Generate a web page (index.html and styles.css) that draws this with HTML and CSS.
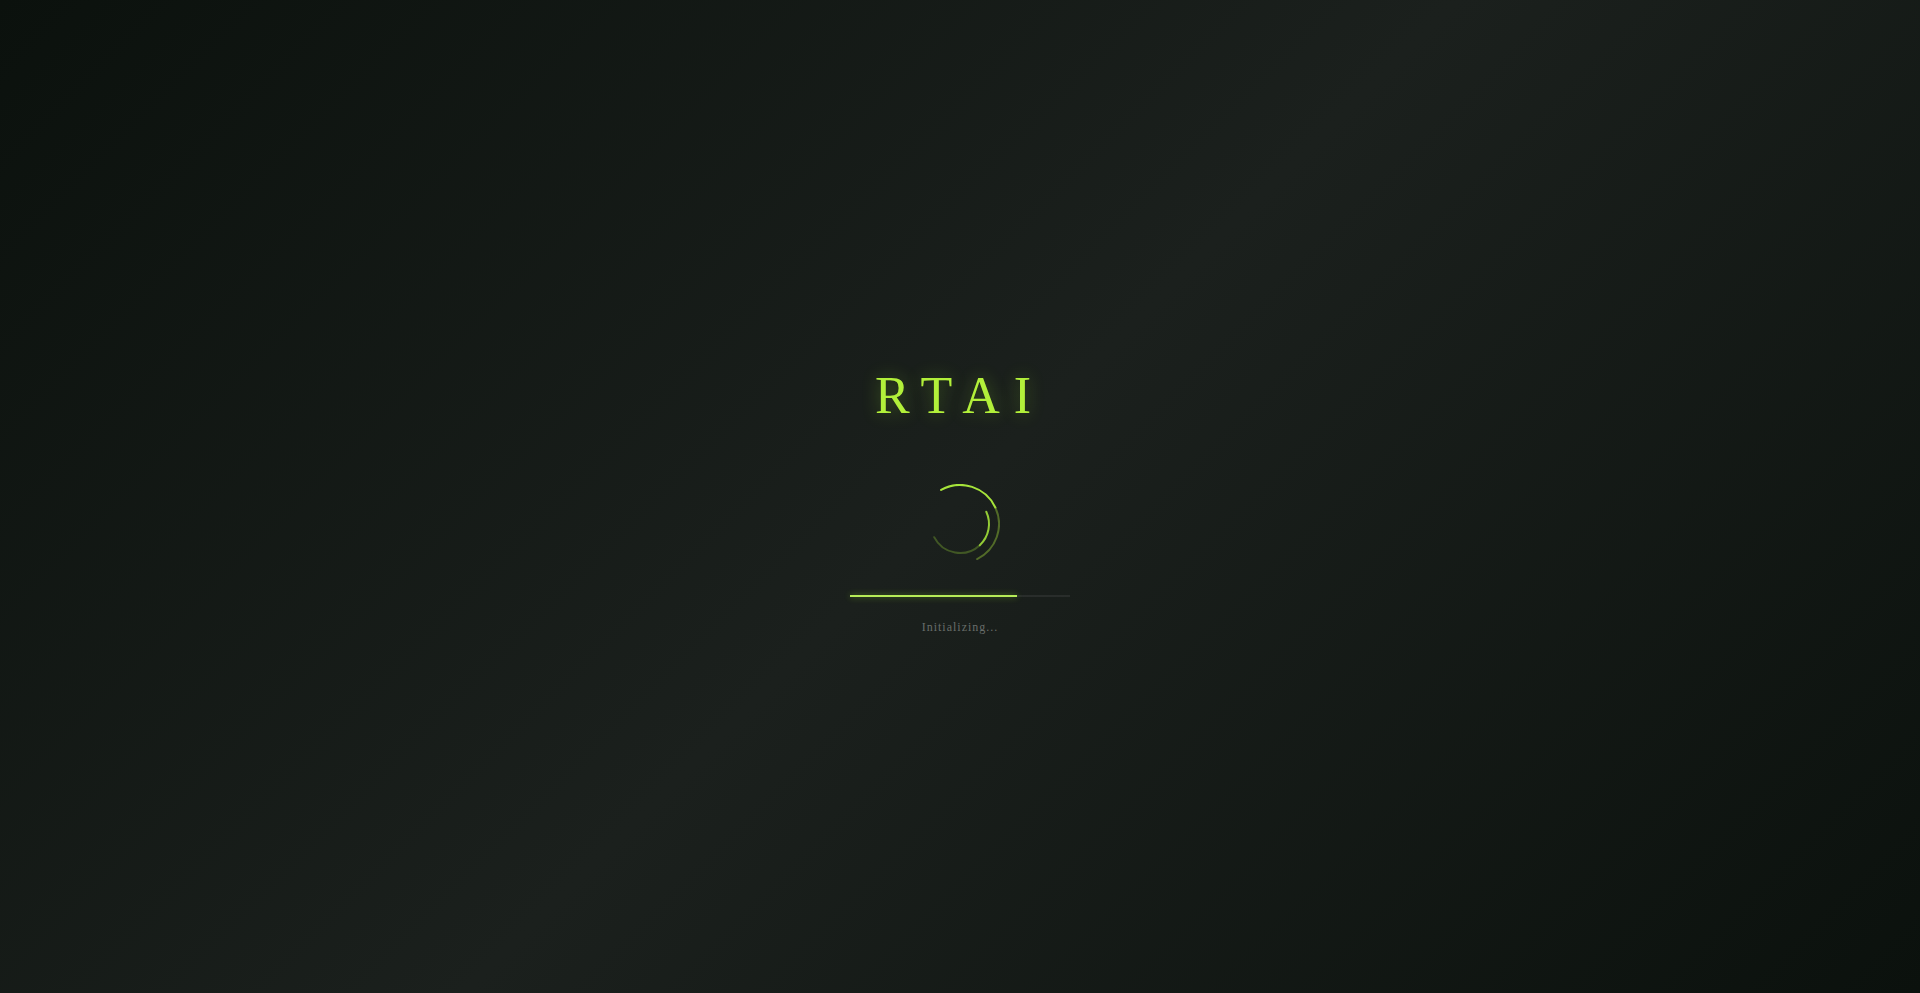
FILE: index.html
```html
<!DOCTYPE html>
<html lang="en">
<head>
<meta charset="utf-8">
<title>RTAI</title>
<link rel="stylesheet" href="styles.css">
</head>
<body>
<main class="loader">
  <h1 class="brand">RTAI</h1>
  <div class="spinner">
    <svg viewBox="0 0 80 80" width="80" height="80" aria-hidden="true">
      <path class="ring-outer-bright" d="M21.1 5.9 A39 39 0 0 1 75.35 23.52"/>
      <path class="ring-outer-dim" d="M75.35 23.52 A39 39 0 0 1 57.1 75.05"/>
      <path class="ring-inner-bright" d="M66.28 27.74 A29 29 0 0 1 59.78 61.21"/>
      <path class="ring-inner-dim" d="M59.78 61.21 A29 29 0 0 1 14.16 53.17"/>
    </svg>
  </div>
  <div class="progress"><div class="progress-fill" style="width:76%"></div></div>
  <p class="status">Initializing...</p>
</main>
</body>
</html>
```

FILE: styles.css
```css
* { box-sizing: border-box; }
html, body { height: 100%; }
body {
  margin: 0;
  background: linear-gradient(135deg, #0b110d 0%, #1b201d 50%, #0b110d 100%);
  font-family: "Liberation Serif", "Times New Roman", serif;
  overflow: hidden;
}
.loader {
  height: 100vh;
  display: flex;
  flex-direction: column;
  align-items: center;
  justify-content: center;
  padding-top: 8px;
}
.brand {
  margin: 0;
  font-size: 52px;
  line-height: 53px;
  font-weight: 400;
  letter-spacing: 14px;
  color: #b2f03a;
  text-shadow: 0 0 18px rgba(173, 255, 47, 0.3);
}
.spinner {
  width: 80px;
  height: 80px;
  margin-top: 62px;
}
.spinner svg { display: block; }
.spinner path { fill: none; stroke-width: 2; stroke-linecap: round; }
.ring-outer-bright { stroke: #a6e43a; }
.ring-outer-dim { stroke: rgba(150, 200, 55, 0.45); }
.ring-inner-bright { stroke: #94cc36; }
.ring-inner-dim { stroke: rgba(130, 180, 50, 0.38); }
.progress {
  width: 220px;
  height: 2px;
  margin-top: 31px;
  background: rgba(255, 255, 255, 0.07);
}
.progress-fill {
  height: 100%;
  background: #b6ec58;
  box-shadow: 0 0 6px rgba(173, 255, 47, 0.45);
}
.status {
  margin: 24px 0 0;
  font-size: 12px;
  line-height: 12px;
  letter-spacing: 1px;
  color: #686d6a;
}
```
